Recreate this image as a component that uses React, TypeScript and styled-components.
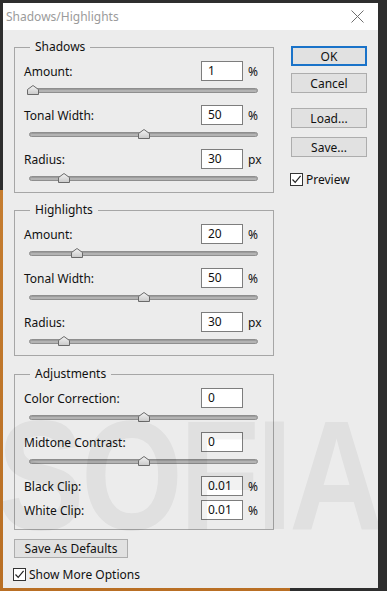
import React from 'react'
import styled, { createGlobalStyle } from 'styled-components'

const GlobalStyle = createGlobalStyle`
  html, body { margin: 0; padding: 0; background: #2e2e2e; }
  * { box-sizing: border-box; }
`

type Ctl = { label: string; value: string; unit?: string; pos?: number; gap?: number }

const shadows: Ctl[] = [
  { label: 'Amount:', value: '1', unit: '%', pos: 1.3 },
  { label: 'Tonal Width:', value: '50', unit: '%', pos: 50 },
  { label: 'Radius:', value: '30', unit: 'px', pos: 15 },
]
const highlights: Ctl[] = [
  { label: 'Amount:', value: '20', unit: '%', pos: 20.5 },
  { label: 'Tonal Width:', value: '50', unit: '%', pos: 50 },
  { label: 'Radius:', value: '30', unit: 'px', pos: 15 },
]
const adjustments: Ctl[] = [
  { label: 'Color Correction:', value: '0', pos: 50 },
  { label: 'Midtone Contrast:', value: '0', pos: 50 },
  { label: 'Black Clip:', value: '0.01', unit: '%' },
  { label: 'White Clip:', value: '0.01', unit: '%', gap: 4 },
]

const Thumb = () => (
  <ThumbSvg width="12" height="10" viewBox="0 0 12 10">
    <defs>
      <linearGradient id="tg" x1="0" y1="0" x2="0" y2="1">
        <stop offset="0" stopColor="#f4f4f4" />
        <stop offset="1" stopColor="#c9c9c9" />
      </linearGradient>
    </defs>
    <polygon points="0.5,4.5 6,0.5 11.5,4.5 11.5,9.5 0.5,9.5" fill="url(#tg)" stroke="#6a6a6a" strokeWidth="1" />
  </ThumbSvg>
)

const Check = () => (
  <Box>
    <svg width="11" height="11" viewBox="0 0 11 11">
      <polyline points="1.5,5.5 4.2,8.4 9.6,1.8" fill="none" stroke="#222" strokeWidth="1.2" />
    </svg>
  </Box>
)

const Group: React.FC<{ title: string; items: Ctl[]; top: number; bottom: number }> = ({ title, items, top, bottom }) => (
  <Frame $top={top} $bottom={bottom}>
    <Legend>{title}</Legend>
    <Fields>
      {items.map((c, i) => (
        <Control key={i} $gap={i === 0 ? 0 : c.gap ?? 6}>
          <Row>
            <Label>{c.label}</Label>
            <Input>{c.value}</Input>
            <Unit>{c.unit}</Unit>
          </Row>
          {c.pos !== undefined && (
            <SliderRow>
              <Track>
                <ThumbAt style={{ left: `calc(${c.pos}% - 6px)` }}>
                  <Thumb />
                </ThumbAt>
              </Track>
            </SliderRow>
          )}
        </Control>
      ))}
    </Fields>
  </Frame>
)

export default function App() {
  return (
    <Desk>
      <GlobalStyle />
      <Window>
        <TitleBar>
          <Title>Shadows/Highlights</Title>
          <svg width="13" height="13" viewBox="0 0 13 13">
            <path d="M0.5 0.5 L12.5 12.5 M12.5 0.5 L0.5 12.5" stroke="#6f6f6f" strokeWidth="1" />
          </svg>
        </TitleBar>
        <Content>
          <LeftCol>
            <Group title="Shadows" items={shadows} top={0} bottom={5} />
            <Group title="Highlights" items={highlights} top={17} bottom={5} />
            <Group title="Adjustments" items={adjustments} top={18} bottom={9} />
            <DefaultsButton>Save As Defaults</DefaultsButton>
            <CheckRow $top={8}>
              <Check />
              <span>Show More Options</span>
            </CheckRow>
          </LeftCol>
          <RightCol>
            <Button $primary>OK</Button>
            <Button $mt={7}>Cancel</Button>
            <Button $mt={15}>Load...</Button>
            <Button $mt={9}>Save...</Button>
            <CheckRow $top={14}>
              <Check />
              <span>Preview</span>
            </CheckRow>
          </RightCol>
        </Content>
        <Watermark>SOFIA</Watermark>
      </Window>
    </Desk>
  )
}

const Desk = styled.div`
  width: 387px;
  height: 591px;
  padding: 3px 9px 3px 3px;
  overflow: hidden;
  background-color: #2e2e2e;
  background-image: linear-gradient(#c57d30, #b96f24);
  background-size: 290px 401px;
  background-position: 0 190px;
  background-repeat: no-repeat;
  font-family: 'Noto Sans', 'Liberation Sans', sans-serif;
`
const Window = styled.div`
  position: relative;
  width: 375px;
  height: 585px;
  background: #ececec;
  display: flex;
  flex-direction: column;
  overflow: hidden;
`
const TitleBar = styled.div`
  height: 27px;
  background: #ffffff;
  display: flex;
  align-items: center;
  justify-content: space-between;
  padding: 0 14px 0 3px;
  flex-shrink: 0;
`
const Title = styled.div`
  font-size: 12px;
  color: #9b9b9b;
`
const Content = styled.div`
  display: flex;
  padding: 17px 0 0 11px;
`
const LeftCol = styled.div`
  width: 260px;
  display: flex;
  flex-direction: column;
`
const RightCol = styled.div`
  width: 76px;
  margin-left: 17px;
  margin-top: -1px;
  display: flex;
  flex-direction: column;
`
const Frame = styled.div<{ $top: number; $bottom: number }>`
  border: 1px solid #a6a6a6;
  margin-top: ${p => p.$top}px;
  padding: 0 14px ${p => p.$bottom}px 9px;
`
const Legend = styled.div`
  display: table;
  margin: -10px 0 0 6px;
  padding: 0 5px;
  background: #ececec;
  line-height: 18px;
  font-size: 12px;
  color: #111;
`
const Fields = styled.div`
  display: flex;
  flex-direction: column;
  margin-top: 5px;
`
const Control = styled.div<{ $gap: number }>`
  margin-top: ${p => p.$gap}px;
`
const Row = styled.div`
  display: flex;
  align-items: center;
  height: 20px;
  font-size: 12px;
  color: #111;
`
const Label = styled.div`
  flex: 1;
`
const Input = styled.div`
  width: 42px;
  height: 20px;
  background: #fff;
  border: 1px solid #7d7d7d;
  padding-left: 6px;
  font-size: 12px;
  line-height: 18px;
  color: #111;
`
const Unit = styled.div`
  width: 16px;
  padding-left: 5px;
  white-space: nowrap;
`
const SliderRow = styled.div`
  height: 18px;
  display: flex;
  align-items: center;
  padding: 0 1px 0 5px;
`
const Track = styled.div`
  position: relative;
  flex: 1;
  height: 5px;
  border-radius: 3px;
  background: #b3b3b3;
  border: 1px solid #8e8e8e;
  box-shadow: inset 0 1px 0 #9c9c9c;
`
const ThumbAt = styled.div`
  position: absolute;
  top: -4px;
  width: 12px;
  height: 10px;
`
const ThumbSvg = styled.svg`
  display: block;
`
const Button = styled.div<{ $primary?: boolean; $mt?: number }>`
  height: 20px;
  margin-top: ${p => p.$mt ?? 0}px;
  background: #e1e1e1;
  border: ${p => (p.$primary ? '2px solid #1a73c9' : '1px solid #adadad')};
  display: flex;
  align-items: center;
  justify-content: center;
  font-size: 12px;
  color: #111;
`
const DefaultsButton = styled(Button)`
  width: 114px;
  height: 19px;
  margin-top: 9px;
`
const CheckRow = styled.div<{ $top: number }>`
  display: flex;
  align-items: center;
  gap: 3px;
  margin-top: ${p => p.$top}px;
  margin-left: -1px;
  font-size: 12px;
  color: #111;
`
const Box = styled.div`
  width: 13px;
  height: 13px;
  background: #fff;
  border: 1px solid #333;
  display: flex;
  align-items: center;
  justify-content: center;
`
const Watermark = styled.div`
  position: absolute;
  left: -6px;
  top: 394px;
  font-family: 'Liberation Sans', sans-serif;
  font-weight: 700;
  font-size: 156px;
  line-height: 1;
  letter-spacing: -4px;
  transform: scaleX(0.84);
  transform-origin: left top;
  color: rgba(0, 0, 0, 0.05);
  pointer-events: none;
  white-space: nowrap;
`
